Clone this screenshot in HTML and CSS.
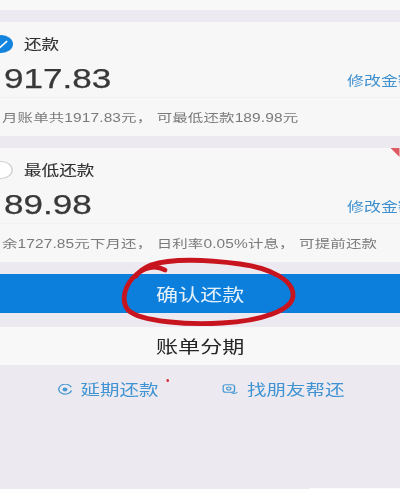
FILE: index.html
```html
<!DOCTYPE html>
<html lang="zh">
<head>
<meta charset="utf-8">
<title>确认还款</title>
<link rel="stylesheet" href="styles.css">
</head>
<body>
<div class="stage">
  <main class="page">
    <div class="top-strip"></div>
    <section class="card">
      <div class="card-head">
        <svg class="check" viewBox="0 0 18 18"><circle cx="9" cy="9" r="9" fill="#1485DE"/><path d="M5 9.5l3 3 5.5-6.5" fill="none" stroke="#fff" stroke-width="1.3"/></svg>
        <span class="label">还款</span>
      </div>
      <div class="amount-row">
        <span class="amount">917.83</span>
        <span class="edit">修改金额</span>
      </div>
      <p class="desc">月账单共1917.83元， 可最低还款189.98元</p>
    </section>
    <section class="card">
      <div class="card-head">
        <svg class="check" viewBox="0 0 18 18"><circle cx="9" cy="9" r="8.4" fill="#fff" stroke="#CFCFCF" stroke-width="1"/></svg>
        <span class="label">最低还款</span>
      </div>
      <div class="amount-row">
        <span class="amount">89.98</span>
        <span class="edit">修改金额</span>
      </div>
      <p class="desc">余1727.85元下月还， 日利率0.05%计息， 可提前还款</p>
    </section>
    <button class="confirm">确认还款</button>
    <button class="installment">账单分期</button>
    <nav class="links">
      <a class="link link-first">
        <svg class="link-icon" viewBox="0 0 12 11"><path d="M10.8 3.2A5 5 0 1 0 11 6.5" fill="none" stroke="#4A9AD4" stroke-width="1.1"/><circle cx="6" cy="5.5" r="1.9" fill="#4A9AD4"/></svg>
        <span>延期还款</span>
        <i class="dot"></i>
      </a>
      <a class="link link-second">
        <svg class="link-icon" viewBox="0 0 12 11"><rect x=".6" y=".8" width="8.8" height="7.4" rx="2" fill="none" stroke="#4A9AD4" stroke-width="1.1"/><circle cx="5" cy="4.5" r="1.6" fill="none" stroke="#4A9AD4" stroke-width="1"/><path d="M7 8.6c1.5 1.2 3.2 1 4.6-.6" fill="none" stroke="#4A9AD4" stroke-width="1.1"/></svg>
        <span>找朋友帮还</span>
      </a>
    </nav>
    <div class="bottom-strip"></div>
  </main>
  <svg class="scribble" viewBox="0 0 400 489">
    <path d="M165 270C156 265 146 267 137 274C125 284 120 300 128 310C140 322 190 325 222 323C262 321 292 310 293 296C294 280 270 268 240 264C210 260 172 258 151 265C144 268 139 271 136 276" fill="none" stroke="#C8141E" stroke-width="4.8" stroke-linecap="round"/>
  </svg>
  <svg class="corner" viewBox="0 0 10 10"><path d="M0 0H10V10Z" fill="#DE5B63"/></svg>
</div>
</body>
</html>
```
FILE: styles.css
```css
* { box-sizing: border-box; }
html, body { margin: 0; padding: 0; }
body { background: #ECEAF0; }
.stage {
  position: relative;
  width: 400px;
  height: 489px;
  overflow: hidden;
  background: #ECEAF0;
}
.page {
  display: flex;
  flex-direction: column;
  width: 308px;
  height: 489px;
  transform: scaleX(1.3);
  transform-origin: 0 0;
  filter: blur(0.55px);
  font-family: "Liberation Sans", "Noto Sans CJK SC", sans-serif;
  color: #303030;
}
.top-strip { height: 10px; background: #F8F8F8; margin-bottom: 12px; }
.card { height: 114px; background: #F7F7F7; margin-bottom: 12px; }
.card-head { display: flex; align-items: center; gap: 8.5px; height: 43px; padding-bottom: 1px; }
.check { width: 18px; height: 18px; margin: 1px 0 0 -8px; flex: none; }
.label { font-size: 13.5px; -webkit-text-stroke: 0.12px #303030; }
.amount-row {
  display: flex;
  align-items: center;
  height: 33px;
  padding: 0 0 4px 3px;
  border-bottom: 1px solid #F1F1F1;
}
.amount { font-size: 27px; color: #383838; -webkit-text-stroke: 0.25px #383838; }
.edit {
  margin-left: auto;
  margin-right: -11px;
  flex: none;
  font-size: 13px;
  color: #3D8FCE;
  white-space: nowrap;
}
.desc {
  display: flex;
  align-items: center;
  height: 38px;
  margin: 0;
  padding: 0 0 2px 1.5px;
  font-size: 11.9px;
  letter-spacing: 0.1px;
  color: #7A7A7A;
  white-space: pre;
}
.confirm, .installment {
  display: block;
  width: 100%;
  border: 0;
  padding: 0 0 1px;
  font-family: inherit;
  font-size: 17px;
}
.confirm { height: 39px; background: #0C7FDC; color: #E4F1FB; margin-bottom: 14px; }
.installment { height: 38px; background: #F8F8F8; color: #262626; }
.links {
  display: flex;
  align-items: center;
  height: 46px;
  padding-left: 44px;
  font-size: 15px;
  color: #3F93D2;
}
.link { display: flex; align-items: center; }
.link-first { width: 127px; position: relative; gap: 6px; }
.link-second { gap: 7px; }
.link-icon { width: 12px; height: 11px; flex: none; margin-top: 2px; }
.dot {
  position: absolute;
  left: 84px;
  top: 1px;
  width: 2.4px;
  height: 3px;
  border-radius: 50%;
  background: #D8303A;
}
.bottom-strip { height: 1px; margin: auto 0 0 238px; background: #FBFBFB; }
.scribble { position: absolute; left: 0; top: 0; width: 400px; height: 489px; filter: blur(0.3px); }
.corner { position: absolute; left: 390px; top: 148px; width: 10px; height: 9px; filter: blur(0.4px); }
```
